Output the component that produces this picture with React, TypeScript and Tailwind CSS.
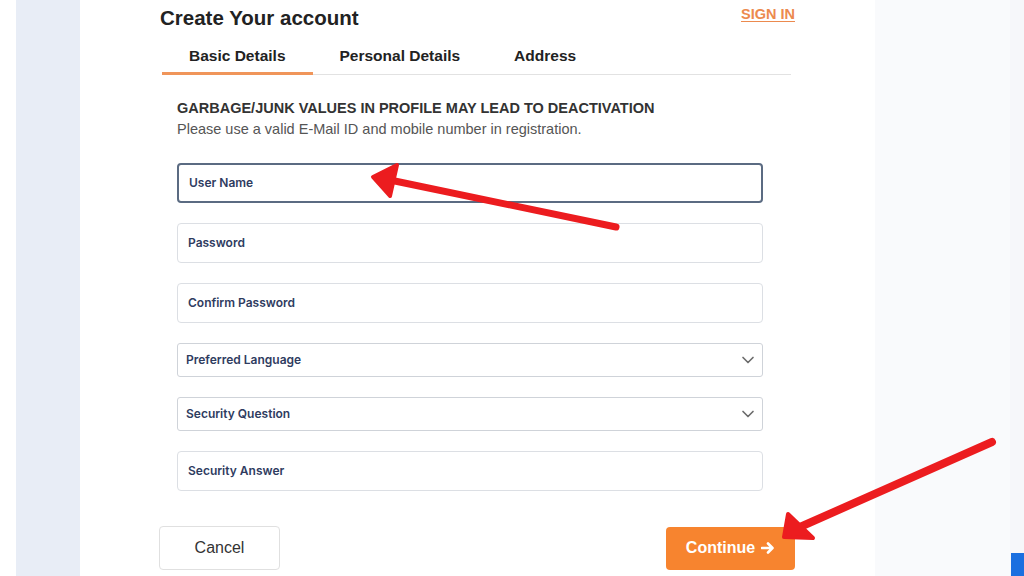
import { ChevronDown } from 'lucide-react';

const textFields = ['User Name', 'Password', 'Confirm Password'];
const selectFields = ['Preferred Language', 'Security Question'];

const tabs = [
  { label: 'Basic Details', active: true },
  { label: 'Personal Details', active: false },
  { label: 'Address', active: false },
];

function Field({ label, focused }: { label: string; focused?: boolean }) {
  return (
    <div
      className={`flex h-10 items-center rounded-[4px] bg-white px-[10px] ${
        focused ? 'border-2 border-[#5b6b82]' : 'border border-[#dcdfe4]'
      }`}
    >
      <span className="font-['Inter',sans-serif] text-[12px] font-semibold text-[#2f3c5f]">{label}</span>
    </div>
  );
}

function SelectField({ label }: { label: string }) {
  return (
    <div className="flex h-[34px] items-center justify-between rounded-[3px] border border-[#cfd3d9] bg-white pl-[8px] pr-[4px]">
      <span className="font-['Inter',sans-serif] text-[12px] font-semibold text-[#2f3c5f]">{label}</span>
      <ChevronDown className="h-5 w-5 text-[#6b6b6b]" strokeWidth={2} />
    </div>
  );
}

export default function App() {
  return (
    <div className="relative flex h-[576px] w-[1024px] overflow-hidden bg-white font-['Liberation_Sans',Arial,sans-serif]">
      <div className="w-4 bg-white" />
      <div className="w-16 bg-[#e8edf6]" />

      <div className="w-[795px] bg-white pl-20">
        <div className="w-[635px]">
          <div className="flex items-start justify-between pt-[6px]">
            <h1 className="text-[20.5px] font-bold leading-6 text-[#222]">Create Your account</h1>
            <a className="text-[14.5px] font-bold leading-4 text-[#ec8a4e] underline underline-offset-2">SIGN IN</a>
          </div>

          <div className="ml-[2px] mt-[10px] flex w-[629px] border-b border-[#e2e2e2]">
            {tabs.map((t) => (
              <div
                key={t.label}
                className={`-mb-[1px] px-[27px] pb-[6px] pt-[6px] text-[15.5px] font-bold leading-5 text-[#222] ${
                  t.active ? 'border-b-[3px] border-[#f0955a]' : 'border-b-[3px] border-transparent'
                }`}
              >
                {t.label}
              </div>
            ))}
          </div>

          <div className="pl-[17px] pr-[32px]">
            <p className="mt-[25px] whitespace-nowrap text-[14.5px] font-bold leading-4 text-[#333]">
              GARBAGE/JUNK VALUES IN PROFILE MAY LEAD TO DEACTIVATION
            </p>
            <p className="mt-[5px] whitespace-nowrap text-[14.5px] leading-4 text-[#555]">
              Please use a valid E-Mail ID and mobile number in registration.
            </p>

            <div className="mt-[26px] flex w-[586px] flex-col gap-5">
              {textFields.map((f, i) => (
                <Field key={f} label={f} focused={i === 0} />
              ))}
              {selectFields.map((f) => (
                <SelectField key={f} label={f} />
              ))}
              <Field label="Security Answer" />
            </div>
          </div>

          <div className="-ml-[1px] mt-[35px] flex items-center justify-between">
            <button className="h-[44px] w-[121px] rounded-[4px] border border-[#e0e0e0] bg-white text-[16px] text-[#333]">
              Cancel
            </button>
            <button className="flex h-[43px] w-[129px] items-center justify-center gap-[6px] rounded-[4px] bg-[#f7842f] text-[16px] font-bold text-white">
              Continue
              <svg width="14" height="12" viewBox="0 0 14 12">
                <path d="M1 6h10M7 1.5 11.5 6 7 10.5" fill="none" stroke="white" strokeWidth="2.6" strokeLinecap="round" strokeLinejoin="round" />
              </svg>
            </button>
          </div>
        </div>
      </div>

      <div className="w-[135px] bg-[#f9fafc]" />
      <div className="relative flex-1 bg-[#f6f7fa]">
        <div className="absolute bottom-0 left-[1px] h-[23px] w-[14px] bg-[#1a6fe0]" />
      </div>

      <svg className="pointer-events-none absolute left-0 top-0" width="1024" height="576" viewBox="0 0 1024 576">
        <g fill="#ec1c1f" stroke="#ec1c1f" strokeLinejoin="round" strokeLinecap="round">
          <line x1="616" y1="227" x2="390" y2="180" strokeWidth="7" />
          <polygon points="373,177 397,165 390,196" strokeWidth="4" />
          <line x1="992" y1="442" x2="800" y2="527" strokeWidth="8" />
          <polygon points="784,537 788,514 813,538" strokeWidth="4" />
        </g>
      </svg>
    </div>
  );
}
